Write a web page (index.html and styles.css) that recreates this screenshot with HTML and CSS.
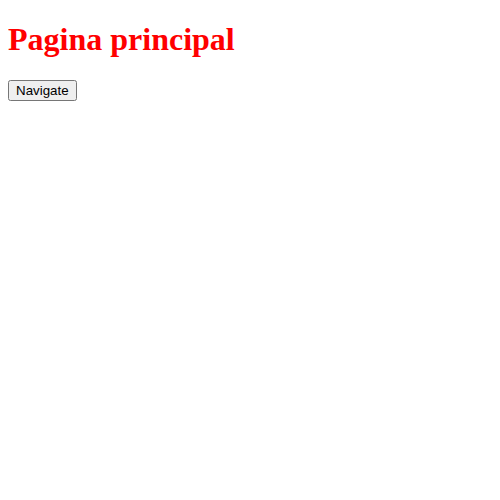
FILE: index.html
```html
<!DOCTYPE html>
<html>
<head>
<meta charset="utf-8">
<link rel="stylesheet" href="styles.css">
</head>
<body class="page">
<h1 class="title">Pagina principal</h1>
<button class="nav-btn">Navigate</button>
</body>
</html>
```

FILE: styles.css
```css
.page {
  margin: 0 8px 8px;
  font-family: "Liberation Serif", serif;
}
.title {
  color: #ff0000;
  font-family: "Liberation Serif", serif;
  font-size: 32px;
  font-weight: bold;
  margin: 21.44px 0;
}
.nav-btn {
  font-family: "Liberation Sans", Arial, sans-serif;
  font-size: 13.333px;
}
```
